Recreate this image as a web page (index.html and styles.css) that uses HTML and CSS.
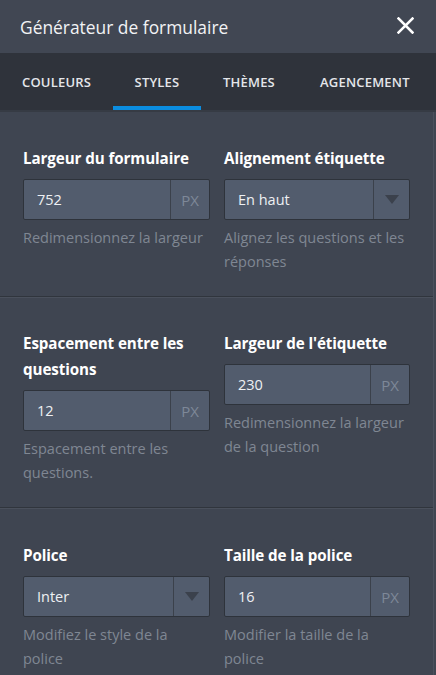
FILE: index.html
```html
<!DOCTYPE html>
<html lang="fr">
<head>
<meta charset="utf-8">
<title>Générateur de formulaire</title>
<link rel="stylesheet" href="styles.css">
</head>
<body>
<div class="panel">
  <header class="header">
    <h1 class="title">Générateur de formulaire</h1>
    <button class="close" aria-label="Fermer">
      <svg width="17" height="17" viewBox="0 0 17 17"><path d="M1.5 1.5 L15.5 15.5 M15.5 1.5 L1.5 15.5" stroke="#fff" stroke-width="2.5" stroke-linecap="square"/></svg>
    </button>
  </header>
  <nav class="tabs">
    <a class="tab">COULEURS</a>
    <a class="tab active">STYLES</a>
    <a class="tab">THÈMES</a>
    <a class="tab">AGENCEMENT</a>
  </nav>
  <main class="content">
    <section class="section">
      <div class="field">
        <div class="label">Largeur du formulaire</div>
        <div class="control">
          <span class="value">752</span>
          <span class="unit">PX</span>
        </div>
        <div class="help">Redimensionnez la largeur</div>
      </div>
      <div class="field">
        <div class="label">Alignement étiquette</div>
        <div class="control">
          <span class="value">En haut</span>
          <span class="arrow"><svg width="14" height="10" viewBox="0 0 14 10"><path d="M0 0 H14 L7 9 Z" fill="#3b414c"/></svg></span>
        </div>
        <div class="help">Alignez les questions et les réponses</div>
      </div>
    </section>
    <section class="section">
      <div class="field">
        <div class="label">Espacement entre les questions</div>
        <div class="control">
          <span class="value">12</span>
          <span class="unit">PX</span>
        </div>
        <div class="help">Espacement entre les questions.</div>
      </div>
      <div class="field">
        <div class="label">Largeur de l'étiquette</div>
        <div class="control">
          <span class="value">230</span>
          <span class="unit">PX</span>
        </div>
        <div class="help">Redimensionnez la largeur de la question</div>
      </div>
    </section>
    <section class="section last">
      <div class="field">
        <div class="label">Police</div>
        <div class="control">
          <span class="value">Inter</span>
          <span class="arrow"><svg width="14" height="10" viewBox="0 0 14 10"><path d="M0 0 H14 L7 9 Z" fill="#3b414c"/></svg></span>
        </div>
        <div class="help">Modifiez le style de la police</div>
      </div>
      <div class="field">
        <div class="label">Taille de la police</div>
        <div class="control">
          <span class="value">16</span>
          <span class="unit">PX</span>
        </div>
        <div class="help">Modifier la taille de la police</div>
      </div>
    </section>
  </main>
</div>
</body>
</html>
```

FILE: styles.css
```css
* { box-sizing: border-box; }
html, body { margin: 0; padding: 0; }
body {
  background: #3f4551;
  font-family: "Open Sans", "Noto Sans", sans-serif;
  color: #fff;
}
.panel {
  width: 436px;
  height: 675px;
  overflow: hidden;
  display: flex;
  flex-direction: column;
}
.header {
  flex-shrink: 0;
  height: 53px;
  background: #414753;
  display: flex;
  align-items: center;
  justify-content: space-between;
  padding: 0 22px 0 20px;
}
.title {
  margin: 0;
  font-size: 17.4px;
  font-weight: 400;
  color: #f2f3f5;
}
.close {
  background: none;
  border: 0;
  padding: 0;
  width: 17px;
  height: 17px;
  display: flex;
  margin-top: -3px;
}
.tabs {
  flex-shrink: 0;
  height: 59px;
  background: #2f333b;
  display: flex;
  align-items: stretch;
  border-bottom: 2px solid #363b44;
}
.tab {
  font-size: 13px;
  font-weight: 600;
  letter-spacing: 0.2px;
  color: #e4e6ea;
  display: flex;
  align-items: center;
  justify-content: center;
  border-bottom: 4px solid transparent;
  padding-top: 4px;
}
.tab:nth-child(1) { width: 113px; justify-content: flex-start; padding-left: 22px; }
.tab:nth-child(2) { width: 88px; }
.tab:nth-child(3) { width: 96px; }
.tab:nth-child(4) { flex: 1; justify-content: flex-start; padding-left: 23px; }
.tab.active { border-bottom-color: #0b8de0; }
.content {
  flex: 1 0 auto;
  background: #3f4551;
  border-right: 1px solid #4b515d;
  margin-right: 2px;
}
.section {
  display: grid;
  grid-template-columns: 187px 186px;
  column-gap: 14px;
  padding: 32px 24px 22px 23px;
  border-bottom: 1px solid #30353d;
  box-shadow: 0 1px 0 #4a505c;
  margin-bottom: 1px;
}
.section:first-child { padding-top: 33px; }
.section.last { padding-top: 33px; }
.field { display: flex; flex-direction: column; }
.label {
  font-size: 15.2px;
  font-weight: 700;
  line-height: 26px;
  color: #fff;
  letter-spacing: -0.1px;
}
.control {
  margin-top: 8px;
  height: 41px;
  display: flex;
  background: #525c6d;
  border: 1px solid #2e333b;
  border-radius: 2px;
}
.value {
  flex: 1;
  display: flex;
  align-items: center;
  padding-left: 13px;
  font-size: 14.5px;
  color: #eef0f3;
}
.unit {
  width: 39px;
  border-left: 1px solid #3b414b;
  display: flex;
  align-items: center;
  justify-content: center;
  font-size: 15px;
  color: #7e8898;
}
.arrow {
  width: 36px;
  border-left: 1px solid #3b414b;
  display: flex;
  align-items: center;
  justify-content: center;
}
.help {
  margin-top: 6px;
  font-size: 14.5px;
  line-height: 24px;
  color: #7f8793;
}
```
